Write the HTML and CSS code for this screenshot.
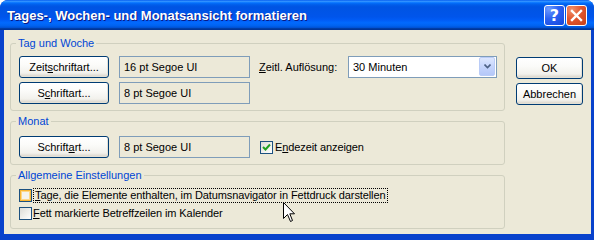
FILE: index.html
```html
<!DOCTYPE html>
<html lang="de">
<head>
<meta charset="utf-8">
<title>Tages-, Wochen- und Monatsansicht formatieren</title>
<link rel="stylesheet" href="styles.css">
</head>
<body>
<div class="window">
  <div class="titlebar">
    <span class="title">Tages-, Wochen- und Monatsansicht formatieren</span>
    <div class="tb-buttons">
      <span class="tb-btn help">?</span>
      <span class="tb-btn close">
        <svg width="13" height="13" viewBox="0 0 13 13"><path d="M2 2 L11 11 M11 2 L2 11" stroke="#fff" stroke-width="2.4" stroke-linecap="square"/></svg>
      </span>
    </div>
  </div>
  <div class="content">
    <div class="groups">
      <div class="group g1">
        <span class="legend">Tag und Woche</span>
        <div class="row">
          <span class="btn w90">Zeit<u>s</u>chriftart...</span>
          <span class="field">16 pt Segoe UI</span>
          <span class="label"><u>Z</u>eitl. Auflösung:</span>
          <span class="combo"><span class="combo-text">30 Minuten</span><span class="combo-arrow"><svg width="7" height="5" viewBox="0 0 7 5"><path d="M0.5 0.5 L3.5 3.5 L6.5 0.5" fill="none" stroke="#4D6185" stroke-width="1.6"/></svg></span></span>
        </div>
        <div class="row">
          <span class="btn w90">S<u>c</u>hriftart...</span>
          <span class="field">8 pt Segoe UI</span>
        </div>
      </div>
      <div class="group g2">
        <span class="legend">Monat</span>
        <div class="row">
          <span class="btn w90">Schrift<u>a</u>rt...</span>
          <span class="field">8 pt Segoe UI</span>
          <span class="check checked"><svg width="9" height="9" viewBox="0 0 9 9"><path d="M1 4 L3.5 6.5 L8 1.5" fill="none" stroke="#21A121" stroke-width="2"/></svg></span>
          <span class="check-label">E<u>n</u>dezeit anzeigen</span>
        </div>
      </div>
      <div class="group g3">
        <span class="legend">Allgemeine Einstellungen</span>
        <div class="crow">
          <span class="check hot"></span>
          <span class="check-label focus"><u>T</u>age, die Elemente enthalten, im Datumsnavigator in Fettdruck darstellen</span>
        </div>
        <div class="crow">
          <span class="check"></span>
          <span class="check-label"><u>F</u>ett markierte Betreffzeilen im Kalender</span>
        </div>
      </div>
    </div>
    <div class="side">
      <span class="btn w67">OK</span>
      <span class="btn w67">Abbrechen</span>
    </div>
  </div>
  <svg class="cursor" width="13" height="21" viewBox="0 0 13 21"><path d="M0.5 0.5 L0.5 16.5 L4.5 12.5 L7.5 19.5 L9.5 18.5 L6.8 11.8 L11.5 11.8 Z" fill="#fff" stroke="#000" stroke-width="1" stroke-linejoin="miter"/></svg>
</div>
</body>
</html>
```
FILE: styles.css
```css
* { box-sizing: border-box; }
html, body { margin: 0; padding: 0; background: #fff; }
body { font-family: "Liberation Sans", Arial, sans-serif; font-size: 11px; color: #000; }
u { text-decoration: underline; text-underline-offset: 1px; }

.window {
  position: relative;
  width: 594px;
  height: 240px;
  display: flex;
  flex-direction: column;
  background: #0842CC;
  border-radius: 8px 8px 0 0;
  overflow: hidden;
}

.titlebar {
  height: 30px;
  display: flex;
  align-items: center;
  justify-content: space-between;
  padding: 0 7px 0 7px;
  background: linear-gradient(180deg, #0058EE 0%, #3593FF 4%, #288EFF 6%, #127DFF 8%, #036FFC 10%, #0262EE 14%, #0057E5 20%, #0054E3 24%, #0055EB 56%, #005BF5 66%, #026AFE 76%, #0062EF 86%, #0052D6 92%, #0040AB 94%, #003092 100%);
}
.title {
  font-family: "Liberation Sans", Arial, sans-serif;
  font-weight: bold;
  font-size: 13px;
  color: #fff;
  text-shadow: 1px 1px 0 #0A1883;
  padding-top: 1px;
}
.tb-buttons { display: flex; gap: 1px; padding-top: 1px; }
.tb-btn {
  width: 21px;
  height: 21px;
  border: 1px solid #fff;
  border-radius: 3px;
  display: flex;
  align-items: center;
  justify-content: center;
  color: #fff;
}
.help {
  background: radial-gradient(circle at 20% 15%, #6E9BFF 0%, #2B62F2 45%, #1446DC 100%);
  font-family: "DejaVu Sans", sans-serif;
  font-weight: bold;
  font-size: 16px;
  line-height: 1;
}
.close {
  background: radial-gradient(circle at 25% 20%, #F1916B 0%, #E2562E 45%, #C8401A 100%);
}

.content {
  flex: 1;
  margin: 0 3px 6px 4px;
  background: #ECE9D8;
  display: flex;
  padding: 13px 0 0 6px;
}

.groups {
  width: 495px;
  display: flex;
  flex-direction: column;
  gap: 10px;
}
.group {
  position: relative;
  border: 1px solid #D0D0BF;
  border-radius: 3px;
}
.legend {
  position: absolute;
  top: -7px;
  left: 5px;
  padding: 0 2px;
  background: #ECE9D8;
  color: #0046D5;
  line-height: 13px;
}
.g1 { height: 68px; padding: 12px 7px 0 8px; display: flex; flex-direction: column; gap: 4px; }
.g2 { height: 44px; padding: 14px 7px 0 8px; }
.g3 { height: 54px; padding: 12px 7px 0 8px; display: flex; flex-direction: column; gap: 3px; }

.row { display: flex; align-items: center; height: 22px; }
.crow { display: flex; align-items: center; height: 15px; gap: 1px; }

.btn {
  height: 22px;
  display: flex;
  align-items: center;
  justify-content: center;
  border: 1px solid #003C74;
  border-radius: 3px;
  background: linear-gradient(180deg, #FFFFFF 0%, #FBFBF9 40%, #F2F1EC 80%, #D6D0C5 100%);
  box-shadow: inset -1px -1px 0 #E3E0D5;
  flex: none;
}
.w90 { width: 90px; }
.w67 { width: 67px; }

.field {
  width: 131px;
  height: 22px;
  margin-left: 10px;
  border: 1px solid #7F9DB9;
  display: flex;
  align-items: center;
  padding-left: 4px;
  background: #ECE9D8;
  flex: none;
}
.label { margin-left: 9px; flex: 1; }
.combo {
  width: 149px;
  height: 22px;
  border: 1px solid #7F9DB9;
  background: #fff;
  display: flex;
  align-items: center;
  justify-content: space-between;
  padding: 1px;
  margin-top: -1px;
}
.combo-text { padding-left: 3px; }
.combo-arrow {
  width: 16px;
  height: 19px;
  border-radius: 2px;
  background: linear-gradient(180deg, #DDE7FE 0%, #C6D5FC 50%, #B5C8F8 100%);
  border: 1px solid #BACCF7;
  display: flex;
  align-items: center;
  justify-content: center;
}

.check {
  width: 13px;
  height: 13px;
  flex: none;
  border: 1px solid #1C5180;
  background: linear-gradient(135deg, #DCDCD7 0%, #F2F2EE 60%, #FFFFFF 100%);
  display: flex;
  align-items: center;
  justify-content: center;
}
.g2 .check { margin-left: 10px; }
.g2 .check-label { margin-left: 2px; }
.check.hot {
  background: #F4F3EE;
  box-shadow: inset 0 0 0 1px #F8B636, inset 0 0 0 2px #FDD889;
}
.check-label { line-height: 13px; letter-spacing: -0.1px; }
.check-label.focus {
  border: 1px dotted #000;
  padding: 0 1px;
}

.side {
  margin-left: 11px;
  padding-top: 14px;
  display: flex;
  flex-direction: column;
  gap: 4px;
}

.cursor {
  position: absolute;
  left: 283px;
  top: 202px;
}
```
